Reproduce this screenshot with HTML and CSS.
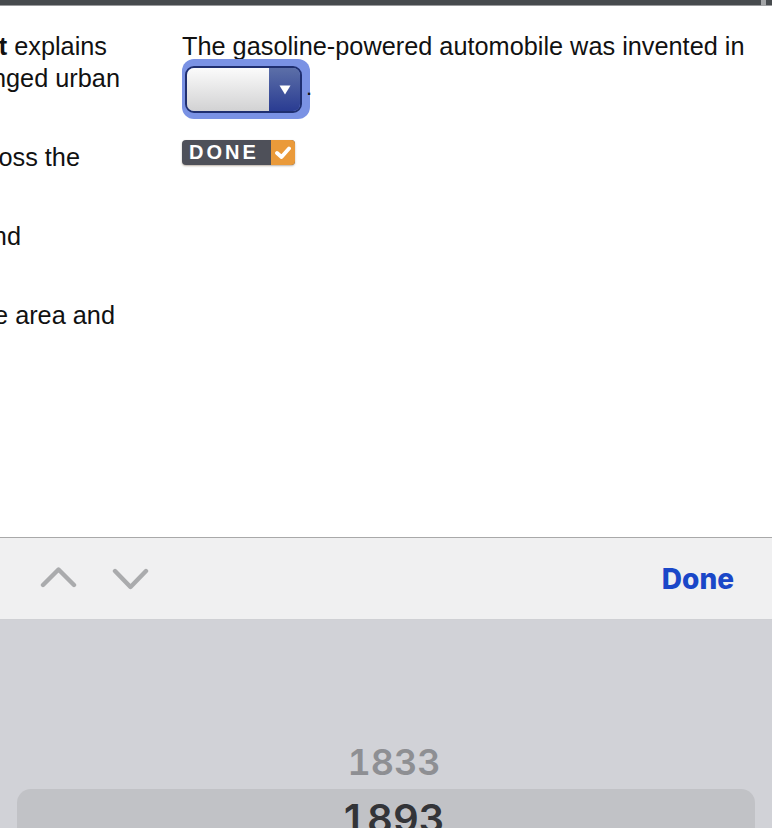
FILE: index.html
```html
<!DOCTYPE html>
<html lang="en">
<head>
<meta charset="utf-8">
<title>Question</title>
<link rel="stylesheet" href="styles.css">
</head>
<body>
<div class="topbar"><span class="thumb"></span></div>
<main class="content">
  <section class="left">
    <p class="para">
      <span class="line l1"><span><b>t</b> explains</span></span>
      <span class="line l2"><span>nged urban</span></span>
    </p>
    <p class="para"><span class="line l3"><span>oss the</span></span></p>
    <p class="para"><span class="line l4"><span>nd</span></span></p>
    <p class="para"><span class="line l5"><span>e area and</span></span></p>
  </section>
  <section class="right">
    <p class="sentence">The gasoline-powered automobile was invented in</p>
    <div class="answer">
      <div class="ring">
        <div class="select">
          <div class="field"></div>
          <div class="arrow"><svg width="12" height="10" viewBox="0 0 12 10"><path d="M0.500 0.500h11L6 9.500z" fill="#fff"/></svg></div>
        </div>
      </div>
      <span class="period">.</span>
    </div>
    <div class="badge">
      <span class="badge-text">DONE</span>
      <span class="badge-check"><svg width="18" height="14" viewBox="0 0 18 14"><path d="M3 7l4.500 4 7.500-8.500" fill="none" stroke="#fff" stroke-width="3.800" stroke-linecap="round" stroke-linejoin="round"/></svg></span>
    </div>
  </section>
</main>
<div class="toolbar">
  <div class="navs">
    <svg class="nav" width="38" height="26" viewBox="0 0 38 26"><path d="M3 19L18.500 3.500 34 19" fill="none" stroke="#aaabad" stroke-width="4.400" stroke-linecap="round" stroke-linejoin="round"/></svg>
    <svg class="nav" width="38" height="26" viewBox="0 0 38 26"><path d="M3 5l15.500 16L34 5" fill="none" stroke="#aaabad" stroke-width="4.400" stroke-linecap="round" stroke-linejoin="round"/></svg>
  </div>
  <span class="done">Done</span>
</div>
<div class="picker">
  <div class="option">1833</div>
  <div class="selected"><span>1893</span></div>
</div>
</body>
</html>
```

FILE: styles.css
```css
* { box-sizing: border-box; }
html, body { margin: 0; height: 100%; }
body {
  width: 772px;
  height: 828px;
  display: flex;
  flex-direction: column;
  overflow: hidden;
  background: #fff;
  font-family: "Liberation Sans", Arial, sans-serif;
  color: #111;
}
.topbar {
  position: relative;
  height: 6px;
  flex: none;
  background: #474b4e;
  border-bottom: 1px solid #9a9b9d;
}
.thumb {
  position: absolute;
  left: 761px;
  top: 0;
  width: 5px;
  height: 6px;
  background: #a3a5a7;
}
.content {
  flex: 1;
  display: flex;
  padding-top: 24px;
  font-size: 25.3px;
  line-height: 32px;
  min-height: 0;
}
.left { width: 182px; flex: none; }
.para { margin: 0 0 47px; }
.line {
  display: flex;
  justify-content: flex-end;
  white-space: nowrap;
}
.l1 { width: 107px; }
.l2 { width: 120px; }
.l3 { width: 80px; }
.l4 { width: 21px; }
.l5 { width: 115px; }
.right { flex: 1; min-width: 0; }
.sentence { margin: 0; white-space: nowrap; }
.answer { display: flex; align-items: flex-end; margin-top: -3px; }
.ring {
  width: 128px;
  height: 60px;
  padding: 7px 8px 6px 3px;
  background: #7a92e4;
  border-radius: 12px;
}
.select {
  height: 100%;
  display: flex;
  border: 2px solid #1f2f70;
  border-radius: 9px;
  overflow: hidden;
}
.field {
  flex: 1;
  background: linear-gradient(#fbfbfb, #d2d2d3);
}
.arrow {
  width: 31px;
  display: flex;
  align-items: center;
  justify-content: center;
  background: linear-gradient(#5c6fa8, #2a3c92);
}
.period { margin-left: -4px; font-size: 22px; line-height: 32px; margin-bottom: 15px; }
.badge {
  display: flex;
  width: 113px;
  height: 25px;
  margin-top: 21px;
  border-radius: 4px;
  overflow: hidden;
  background: #4e5059;
  box-shadow: 0 1px 2px rgba(120, 100, 80, 0.5);
}
.badge-text {
  flex: 1;
  padding-left: 7px;
  color: #fff;
  font-size: 20px;
  line-height: 25px;
  font-weight: 700;
  letter-spacing: 3px;
}
.badge-check {
  width: 24px;
  display: flex;
  align-items: center;
  justify-content: center;
  background: #ea9a3a;
}
.toolbar {
  flex: none;
  height: 82px;
  display: flex;
  align-items: center;
  justify-content: space-between;
  padding: 0 38px 0 40px;
  background: #f0f0f1;
  border-top: 1px solid #a9a9a9;
}
.navs { display: flex; gap: 34px; }
.done {
  color: #1a47c8;
  font-family: Inter, sans-serif;
  font-size: 28px;
  font-weight: 800;
}
.picker {
  flex: none;
  height: 209px;
  overflow: hidden;
  padding: 120px 17px 0;
  background: #d1d2d7;
  border-top: 1px solid #cfd0d4;
  font-family: Inter, sans-serif;
  text-align: center;
  font-variant-numeric: tabular-nums;
}
.option {
  height: 49px;
  padding-left: 16px;
  font-size: 36px;
  line-height: 44px;
  color: #8e8f93;
  font-weight: 600;
}
.selected {
  height: 90px;
  padding-left: 14px;
  padding-top: 7px;
  font-size: 40px;
  line-height: 46px;
  color: #333438;
  font-weight: 600;
  background: #c1c2c6;
  border-radius: 14px;
}
```
